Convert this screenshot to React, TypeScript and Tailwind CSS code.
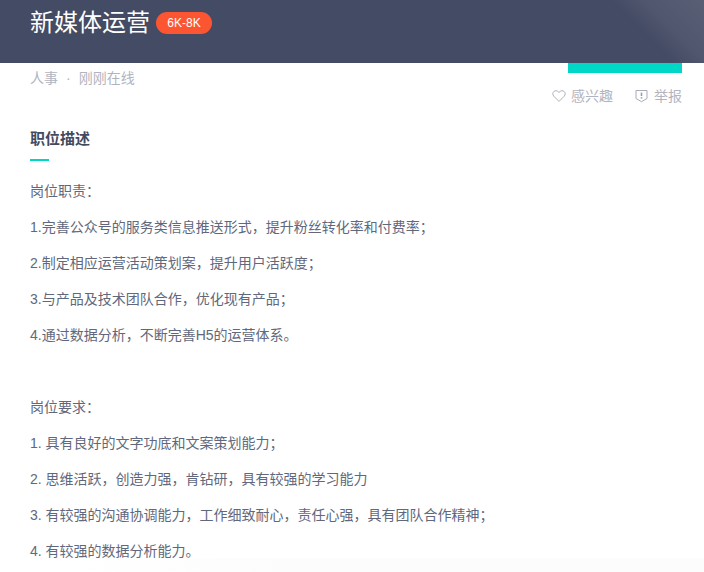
import React from "react";

const lines: { t: string; gap?: boolean }[] = [
  { t: "岗位职责：" },
  { t: "1.完善公众号的服务类信息推送形式，提升粉丝转化率和付费率；" },
  { t: "2.制定相应运营活动策划案，提升用户活跃度；" },
  { t: "3.与产品及技术团队合作，优化现有产品；" },
  { t: "4.通过数据分析，不断完善H5的运营体系。" },
  { t: "", gap: true },
  { t: "岗位要求：" },
  { t: "1. 具有良好的文字功底和文案策划能力；" },
  { t: "2. 思维活跃，创造力强，肯钻研，具有较强的学习能力" },
  { t: "3. 有较强的沟通协调能力，工作细致耐心，责任心强，具有团队合作精神；" },
  { t: "4. 有较强的数据分析能力。" },
];

const font = { fontFamily: '"Liberation Sans", "Noto Sans CJK SC", sans-serif' };

export default function App() {
  return (
    <div className="relative w-[704px] h-[572px] overflow-hidden bg-white" style={font}>
      <header className="h-[63px] bg-[linear-gradient(45deg,#444b64_0%,#444b64_88%,#4f566d_92%,#596076_100%)] pl-[30px] pt-[5px] flex items-start gap-[6px]">
        <h1 className="text-[24px] leading-[36px] font-normal text-white">新媒体运营</h1>
        <span className="mt-[7px] h-[22px] w-[56px] rounded-full bg-[#fc5531] text-white text-[12px] leading-[22px] text-center">6K-8K</span>
      </header>
      <div className="flex justify-between pl-[30px] pr-[22px]">
        <div className="pt-[5px] text-[14px] leading-[20px] text-[#b1b4c0]">
          人事<span className="mx-[8px]">·</span>刚刚在线
        </div>
        <div className="flex flex-col items-end">
          <div className="w-[114px] h-[10px] bg-[#00d7c6]" />
          <div className="mt-[13px] flex items-center text-[14px] leading-[20px] text-[#b1b4c0]">
            <svg width="14" height="14" viewBox="0 0 15 14" fill="none" stroke="#a9abb8" strokeWidth="1" className="mr-[5px]">
              <path d="M7.5 12.8 L2 7.3 C0.4 5.6 0.6 3.3 2 2.1 C3.6 0.8 5.9 1.1 7.5 3.2 C9.1 1.1 11.4 0.8 13 2.1 C14.4 3.3 14.6 5.6 13 7.3 Z" />
            </svg>
            <span>感兴趣</span>
            <svg width="13" height="14" viewBox="0 0 13 14" fill="none" className="ml-[22px] mr-[6px]">
              <path d="M1 1.5 H12 V9.5 L6.5 12.7 L1 9.5 Z" stroke="#a9abb8" strokeWidth="1" strokeLinejoin="round" />
              <path d="M6.5 3.6 V7" stroke="#9a9caa" strokeWidth="1.6" />
              <path d="M6.5 8.2 V9.6" stroke="#9a9caa" strokeWidth="1.6" />
            </svg>
            <span>举报</span>
          </div>
        </div>
      </div>
      <section className="pl-[30px]">
        <h2 className="mt-[23px] text-[15px] leading-[20px] font-bold text-[#414a60]">职位描述</h2>
        <div className="mt-[10px] w-[19px] h-[2px] bg-[#00d7c6]" />
        <div className="mt-[12px] text-[14px] leading-[36px] text-[#61687c]">
          {lines.map((l, i) => (
            <p key={i} className="h-[36px]">{l.t}</p>
          ))}
        </div>
      </section>
      <div className="absolute left-0 right-0 bottom-0 h-[14px] bg-[linear-gradient(to_right,transparent_10%,#fbfbfb_40%)] opacity-70" />
    </div>
  );
}
